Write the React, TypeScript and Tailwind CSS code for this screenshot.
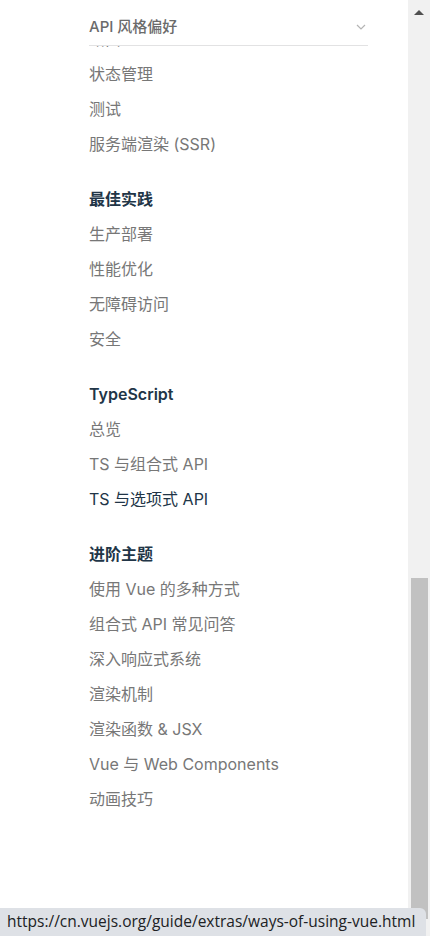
const font = { fontFamily: '"Inter", "Noto Sans CJK SC", sans-serif' };

interface Group {
  title: string;
  items: string[];
}

const groups: Group[] = [
  { title: '最佳实践', items: ['生产部署', '性能优化', '无障碍访问', '安全'] },
  { title: 'TypeScript', items: ['总览', 'TS 与组合式 API', 'TS 与选项式 API'] },
  {
    title: '进阶主题',
    items: ['使用 Vue 的多种方式', '组合式 API 常见问答', '深入响应式系统', '渲染机制', '渲染函数 & JSX', 'Vue 与 Web Components', '动画技巧'],
  },
];

const hovered = 'TS 与选项式 API';

const Item = ({ label }: { label: string }) => (
  <div
    className={`h-[35px] shrink-0 flex items-center text-[16px] leading-[24px] ${
      label === hovered ? 'text-[#213547]' : 'text-[#777777]'
    }`}
  >
    {label}
  </div>
);

const App = () => {
  return (
    <div className="relative w-[430px] h-[936px] overflow-hidden bg-white flex" style={font}>
      <main className="flex-1 pl-[89px] pr-[40px] flex flex-col">
        <div className="h-[46px] shrink-0 border-b border-[#e2e2e3] flex flex-col">
          <div className="mt-[15px] h-[24px] flex items-center justify-between">
            <span className="text-[15px] font-medium text-[#6b6b6b]">API 风格偏好</span>
            <svg width="10" height="6" viewBox="0 0 10 6" className="mr-[2px]">
              <path d="M1 1l4 4 4-4" fill="none" stroke="#b4b4b4" strokeWidth="1.2" />
            </svg>
          </div>
        </div>

        <div className="h-[10px] overflow-hidden flex flex-col justify-end">
          <Item label="路由" />
        </div>
        <Item label="状态管理" />
        <Item label="测试" />
        <Item label="服务端渲染 (SSR)" />

        {groups.map((g) => (
          <section key={g.title} className="mt-[20px] flex flex-col">
            <h2 className="h-[35px] flex items-center text-[16px] leading-[24px] font-semibold text-[#213547]">{g.title}</h2>
            {g.items.map((it) => (
              <Item key={it} label={it} />
            ))}
          </section>
        ))}
      </main>

      {/* scrollbar */}
      <div className="w-[22px] shrink-0 bg-[#f1f1f1] flex flex-col items-center">
        <div className="h-[25px] w-full flex items-center justify-center">
          <div className="w-0 h-0 border-l-[5px] border-r-[5px] border-b-[5px] border-l-transparent border-r-transparent border-b-[#505050]" />
        </div>
        <div className="mt-[553px] w-[17px] h-[341px] bg-[#c1c1c1]" />
      </div>

      {/* status bubble */}
      <div className="absolute left-0 bottom-0 right-[4px] h-[28px] bg-[#dee1e6] rounded-tr-[6px] flex items-center pl-[7px]">
        <span className="text-[15.5px] text-[#202124]" style={{ fontFamily: '"Open Sans", "Liberation Sans", sans-serif' }}>
          https://cn.vuejs.org/guide/extras/ways-of-using-vue.html
        </span>
      </div>
    </div>
  );
};

export default App;
